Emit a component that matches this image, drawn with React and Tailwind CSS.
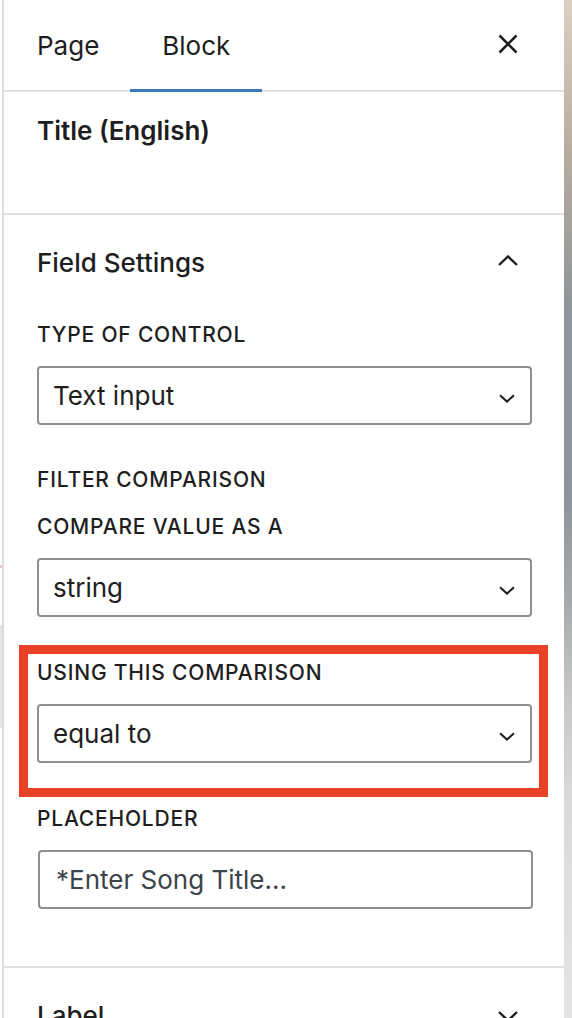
import React from 'react';

function ChevronDown({ className = '' }) {
  return (
    <svg width="16" height="9" viewBox="0 0 16 9" fill="none" className={className}>
      <path d="M1 1.2L8 7.6L15 1.2" stroke="#1e1e1e" strokeWidth="2" />
    </svg>
  );
}

function ChevronUpLarge({ className = '' }) {
  return (
    <svg width="20" height="11" viewBox="0 0 20 11" fill="none" className={className}>
      <path d="M1 10L10 1.5L19 10" stroke="#1e1e1e" strokeWidth="2.4" />
    </svg>
  );
}

function ChevronDownLarge({ className = '' }) {
  return (
    <svg width="20" height="11" viewBox="0 0 20 11" fill="none" className={className}>
      <path d="M1 1L10 9.5L19 1" stroke="#1e1e1e" strokeWidth="2.4" />
    </svg>
  );
}

function CloseIcon({ className = '' }) {
  return (
    <svg width="20" height="20" viewBox="0 0 20 20" fill="none" className={className}>
      <path d="M1.5 1.5L18.5 18.5M18.5 1.5L1.5 18.5" stroke="#1e1e1e" strokeWidth="2.6" />
    </svg>
  );
}

function FieldLabel({ children, className = '' }) {
  return (
    <div className={`h-[20px] leading-[20px] text-[21px] tracking-[0.8px] font-medium uppercase text-[#1e1e1e] ${className}`}>
      {children}
    </div>
  );
}

function SelectBox({ value, className = '' }) {
  return (
    <div className={`h-[59px] border-2 border-[#8c8f94] rounded-[4px] flex items-center justify-between pl-[14px] pr-[15px] ${className}`}>
      <span className="text-[26px] text-[#1e1e1e]">{value}</span>
      <ChevronDown className="mt-[5px]" />
    </div>
  );
}

export default function App() {
  return (
    <div className="flex w-[572px] h-[1018px] overflow-hidden bg-white font-['Inter',sans-serif]">
      {/* page peeking at the far left */}
      <div className="w-[2px] flex flex-col shrink-0">
        <div className="h-[565px] shrink-0" />
        <div className="h-[3px] shrink-0 bg-[#ecc9c1]" />
        <div className="h-[57px] shrink-0" />
        <div className="h-[103px] shrink-0 bg-[#e5e5e9]" />
      </div>
      <div className="w-[2px] shrink-0 bg-[#dcdcdc]" />

      <div className="w-[560px] shrink-0 flex flex-col">
        {/* tabs */}
        <div className="h-[92px] shrink-0 box-border border-b-2 border-[#e0e0e0] flex items-center">
          <div className="h-full pl-[33px] pr-[31px] flex items-center text-[26px] text-[#1e1e1e]">Page</div>
          <div className="relative h-full px-[32px] flex items-center text-[26px] text-[#1e1e1e]">
            Block
            <span className="absolute left-0 right-0 bottom-[-2px] h-[3px] bg-[#3a7bbd]" />
          </div>
          <button className="ml-auto mr-[46px] mb-[2px] flex">
            <CloseIcon />
          </button>
        </div>

        {/* block card */}
        <div className="h-[123px] shrink-0 box-border border-b-2 border-[#e0e0e0] pl-[33px] pt-[23px]">
          <div className="h-[32px] leading-[32px] text-[26px] font-semibold text-[#1e1e1e]">Title (English)</div>
        </div>

        {/* field settings */}
        <div className="shrink-0 box-border border-b-2 border-[#e0e0e0] pl-[33px] pr-[32px] pt-[32px] pb-[57px]">
          <div className="h-[32px] flex items-center justify-between">
            <span className="text-[26px] leading-[32px] font-medium text-[#1e1e1e]">Field Settings</span>
            <ChevronUpLarge className="mr-[14px] mb-[5px]" />
          </div>

          <FieldLabel className="mt-[46px]">Type of control</FieldLabel>
          <SelectBox value="Text input" className="mt-[21px]" />

          <FieldLabel className="mt-[45px]">Filter comparison</FieldLabel>
          <FieldLabel className="mt-[27px]">Compare value as a</FieldLabel>
          <SelectBox value="string" className="mt-[21px]" />

          <div className="relative mt-[46px]">
            <FieldLabel>Using this comparison</FieldLabel>
            <SelectBox value="equal to" className="mt-[21px]" />
            <div className="absolute top-[-18px] left-[-18px] right-[-16px] bottom-[-34px] border-[9px] border-[#e84126] pointer-events-none" />
          </div>

          <FieldLabel className="mt-[46px]">Placeholder</FieldLabel>
          <div className="mt-[21px] ml-[1px] w-[495px] h-[59px] border-2 border-[#8c8f94] rounded-[4px] flex items-center pl-[16px]">
            <span className="text-[26px] text-[#3c434a]">*Enter Song Title...</span>
          </div>
        </div>

        {/* label section (collapsed) */}
        <div className="shrink-0 pl-[33px] pr-[32px] pt-[32px]">
          <div className="h-[32px] flex items-center justify-between">
            <span className="text-[26px] leading-[32px] font-medium text-[#1e1e1e]">Label</span>
            <ChevronDownLarge className="mr-[14px]" />
          </div>
        </div>
      </div>

      <div className="w-[8px] shrink-0 bg-[linear-gradient(to_bottom,#dad1c4_0%,#b6ad9f_15%,#8f9598_30%,#8e9498_49%,#a7aaab_59%,#c8c8c8_69%,#dadada_79%,#e4e4e4_100%)]" />
    </div>
  );
}
